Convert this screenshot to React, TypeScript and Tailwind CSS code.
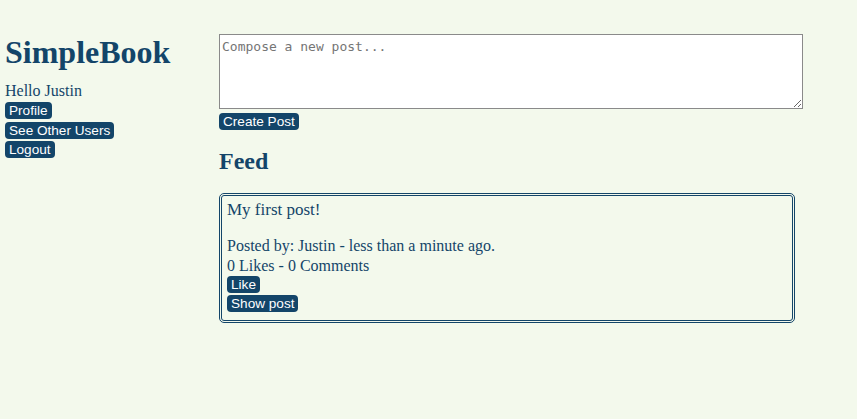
const ink = "text-[#134569]";

function Btn({ children }: { children: string }) {
  return (
    <button className="block h-[17px] rounded-[4px] bg-[#134569] px-[4px] font-['Liberation_Sans',Arial,sans-serif] text-[13.6px] leading-[17px] text-white">
      {children}
    </button>
  );
}

export default function App() {
  return (
    <div className={`min-h-[419px] bg-[#f3f9ec] ${ink} font-['Liberation_Serif','Times_New_Roman',serif]`}>
      <div className="flex px-[5px] pt-[34px]">
        <aside className="w-[214px] shrink-0">
          <h1 className="text-[32px] font-bold leading-[37px]">SimpleBook</h1>
          <p className="mt-[11px] text-[16px] leading-[18px]">Hello Justin</p>
          <div className="mt-[2px] flex flex-col items-start gap-[2.5px]">
            <Btn>Profile</Btn>
            <Btn>See Other Users</Btn>
            <Btn>Logout</Btn>
          </div>
        </aside>
        <main className="w-[584px]">
          <textarea
            className="block h-[75px] w-full resize-y border border-[#8a8a8a] bg-white px-[2px] py-[2px] font-['DejaVu_Sans_Mono',monospace] text-[13px] placeholder:text-[#757575]"
            placeholder="Compose a new post..."
          />
          <div className="mt-[4px]">
            <Btn>Create Post</Btn>
          </div>
          <h2 className="mt-[17px] text-[24px] font-bold leading-[28px]">Feed</h2>
          <article className="mt-[18px] w-[576px] rounded-[5px] border-[3px] border-double border-[#134569] px-[5px] pt-[4px] pb-[8px]">
            <p className="text-[17px] leading-[20px]">My first post!</p>
            <p className="mt-[16px] text-[16px] leading-[20px]">Posted by: Justin - less than a minute ago.</p>
            <p className="text-[16px] leading-[20px]">0 Likes - 0 Comments</p>
            <div className="flex flex-col items-start gap-[2px]">
              <Btn>Like</Btn>
              <Btn>Show post</Btn>
            </div>
          </article>
        </main>
      </div>
    </div>
  );
}
